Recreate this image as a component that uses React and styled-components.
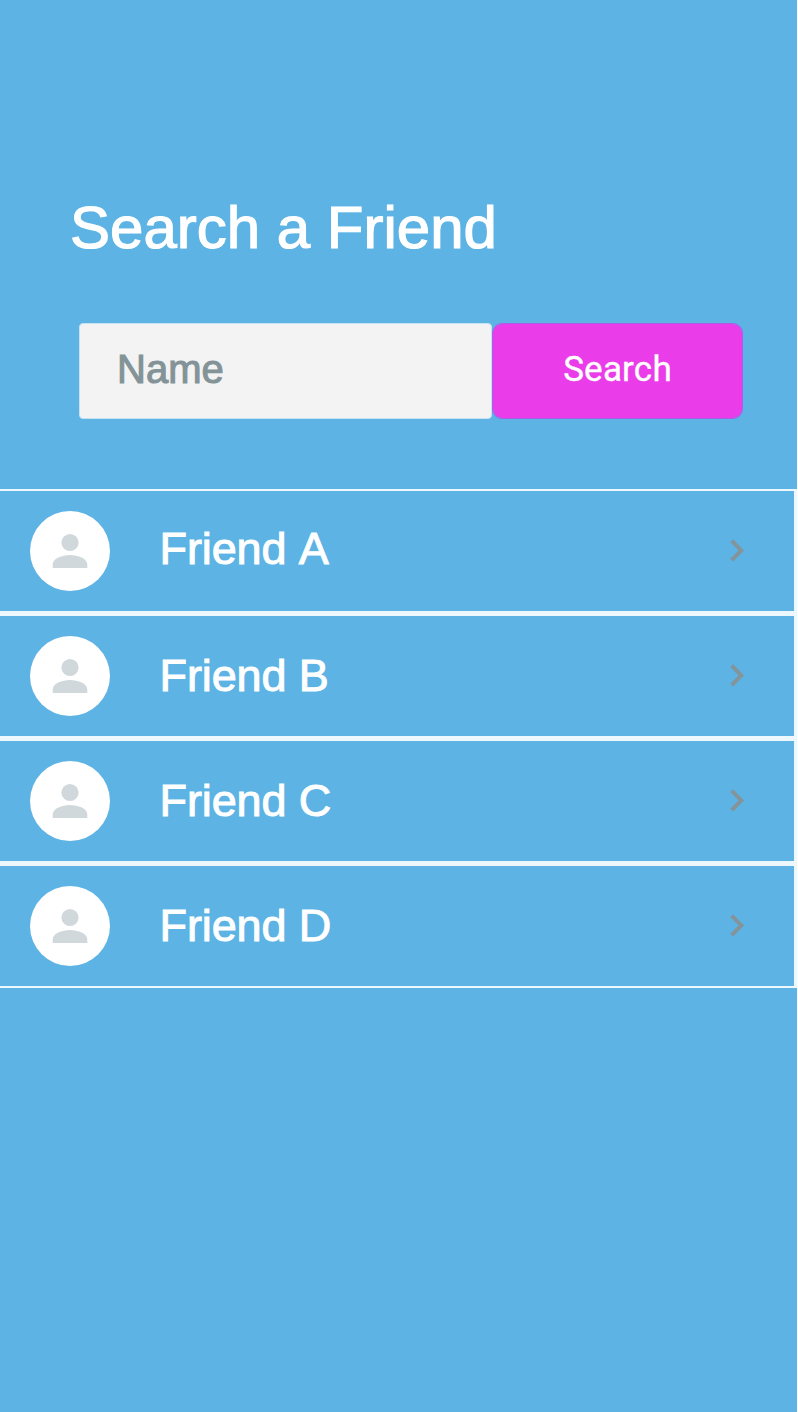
import React from "react";
import styled, { createGlobalStyle } from "styled-components";

const GlobalStyle = createGlobalStyle`
  * { box-sizing: border-box; }
  body { margin: 0; background: #ffffff; }
`;

const Screen = styled.main`
  width: 797px;
  height: 1412px;
  padding-top: 188px;
  background: #5cb3e4;
  font-family: "Liberation Sans", Arial, sans-serif;
  color: #ffffff;
`;

const Title = styled.h1`
  margin: 0 0 55px 70px;
  font-size: 60px;
  line-height: 80px;
  font-weight: 400;
  -webkit-text-stroke: 1.2px #ffffff;
`;

const SearchForm = styled.form`
  display: flex;
  width: 664px;
  height: 96px;
  margin: 0 0 70px 79px;
`;

const NameInput = styled.input`
  width: 413px;
  height: 96px;
  padding: 0 0 3px 37px;
  border: 1px solid #c5e2f2;
  border-radius: 4px;
  background: #f3f3f3;
  font: 400 40px "Liberation Sans", Arial, sans-serif;
  outline: none;

  &::placeholder {
    color: #849398;
    opacity: 1;
    -webkit-text-stroke: 1.1px #849398;
  }
`;

const SearchButton = styled.button`
  width: 251px;
  height: 96px;
  padding: 0 0 4px;
  border: 1px solid #a65fe6;
  border-radius: 10px;
  background: #ea3ce8;
  background-clip: padding-box;
  color: #ffffff;
  font: 400 35px Roboto, sans-serif;
  letter-spacing: 0.2px;
  -webkit-text-stroke: 0.4px #ffffff;
`;

const FriendList = styled.ul`
  margin: 0;
  padding: 0;
  list-style: none;
`;

const FriendRow = styled.li`
  display: flex;
  align-items: center;
  height: 125px;
  padding: 0 48px 0 29.5px;
  border: solid #ecf7fe;
  border-width: 2px 3px 3px 0;

  &:last-child {
    height: 124px;
    border-bottom-width: 2px;
  }
`;

const Avatar = styled.span`
  display: flex;
  width: 80px;
  height: 80px;
  align-items: center;
  justify-content: center;
  border-radius: 50%;
  background: #ffffff;
`;

const FriendName = styled.span`
  flex: 1;
  margin-left: 50px;
  padding-bottom: ${(p) => (p.$raised ? 4 : 0)}px;
  font-size: 45px;
  line-height: 52px;
  font-kerning: none;
  letter-spacing: -0.1px;
  -webkit-text-stroke: 1px #ffffff;
`;

const friends = ["Friend A", "Friend B", "Friend C", "Friend D"];

const PersonIcon = () => (
  <svg width="36" height="36" viewBox="0 0 36 36" fill="#d0d8db" aria-hidden="true">
    <circle cx="18" cy="9.5" r="8.6" />
    <path d="M.7 35V31.5C.7 25.5 10 22 18 22s17.3 3.5 17.3 9.5V35Z" />
  </svg>
);

const Chevron = () => (
  <svg width="18" height="26" viewBox="0 0 18 26" fill="none" aria-hidden="true">
    <path d="M3.7 2.6 13.3 12.4 3.7 22.2" stroke="#85939a" strokeWidth="3.9" />
  </svg>
);

export default function App() {
  return (
    <>
      <GlobalStyle />
      <Screen>
        <Title>Search a Friend</Title>
        <SearchForm onSubmit={(e) => e.preventDefault()}>
          <NameInput placeholder="Name" aria-label="Name" />
          <SearchButton type="submit">Search</SearchButton>
        </SearchForm>
        <FriendList>
          {friends.map((name, index) => (
            <FriendRow key={name}>
              <Avatar>
                <PersonIcon />
              </Avatar>
              <FriendName $raised={index === 0}>{name}</FriendName>
              <Chevron />
            </FriendRow>
          ))}
        </FriendList>
      </Screen>
    </>
  );
}
